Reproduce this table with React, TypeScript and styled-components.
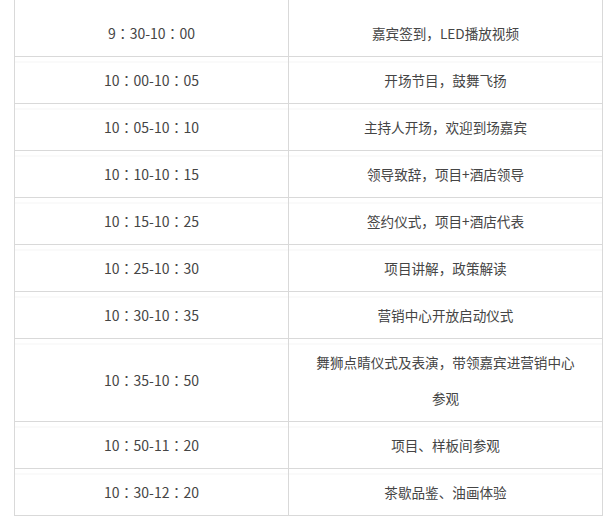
import React from 'react';
import styled, { createGlobalStyle } from 'styled-components';

const GlobalStyle = createGlobalStyle`
  html, body {
    margin: 0;
    padding: 0;
    background: #ffffff;
  }
  body {
    font-family: "Noto Sans CJK SC", "Noto Sans", sans-serif;
  }
`;

const Page = styled.div`
  width: 609px;
  height: 531px;
  overflow: hidden;
  padding-left: 14px;
  box-sizing: border-box;
`;

const Table = styled.table`
  width: 588px;
  border-collapse: collapse;
  table-layout: fixed;
  border-left: 1px solid #d9d9d9;
  border-right: 1px solid #d9d9d9;
`;

const Col = styled.col<{ $w: number }>`
  width: ${(p) => p.$w}px;
`;

const Cell = styled.td<{ $first?: boolean; $wide?: boolean }>`
  box-sizing: border-box;
  padding: ${(p) => (p.$first ? '15px 4px 5px' : '5px 4px')};
  border-bottom: 1px solid #d9d9d9;
  border-left: ${(p) => (p.$wide ? '1px solid #d9d9d9' : 'none')};
  text-align: center;
  vertical-align: middle;
  line-height: 36px;
  color: #454545;
  font-size: ${(p) => (p.$wide ? '13.6px' : '14px')};
  font-family: ${(p) =>
    p.$wide
      ? '"Noto Sans CJK SC", "Noto Sans", sans-serif'
      : '"Noto Sans CJK JP", "Noto Sans", sans-serif'};
  background: ${(p) =>
    p.$first
      ? 'none'
      : 'linear-gradient(to bottom, transparent 4px, #f4f4f4 4px, #f4f4f4 5px, transparent 5px)'};
`;

const Line = styled.span`
  display: block;
`;

const rows: { time: string; text: string[] }[] = [
  { time: '9：30-10：00', text: ['嘉宾签到，LED播放视频'] },
  { time: '10：00-10：05', text: ['开场节目，鼓舞飞扬'] },
  { time: '10：05-10：10', text: ['主持人开场，欢迎到场嘉宾'] },
  { time: '10：10-10：15', text: ['领导致辞，项目+酒店领导'] },
  { time: '10：15-10：25', text: ['签约仪式，项目+酒店代表'] },
  { time: '10：25-10：30', text: ['项目讲解，政策解读'] },
  { time: '10：30-10：35', text: ['营销中心开放启动仪式'] },
  { time: '10：35-10：50', text: ['舞狮点睛仪式及表演，带领嘉宾进营销中心', '参观'] },
  { time: '10：50-11：20', text: ['项目、样板间参观'] },
  { time: '10：30-12：20', text: ['茶歇品鉴、油画体验'] },
];

export default function App() {
  return (
    <Page>
      <GlobalStyle />
      <Table>
        <colgroup>
          <Col $w={274} />
          <Col $w={314} />
        </colgroup>
        <tbody>
          {rows.map((r, i) => (
            <tr key={i}>
              <Cell $first={i === 0}>{r.time}</Cell>
              <Cell $first={i === 0} $wide>
                {r.text.map((t, j) => (
                  <Line key={j}>{t}</Line>
                ))}
              </Cell>
            </tr>
          ))}
        </tbody>
      </Table>
    </Page>
  );
}
